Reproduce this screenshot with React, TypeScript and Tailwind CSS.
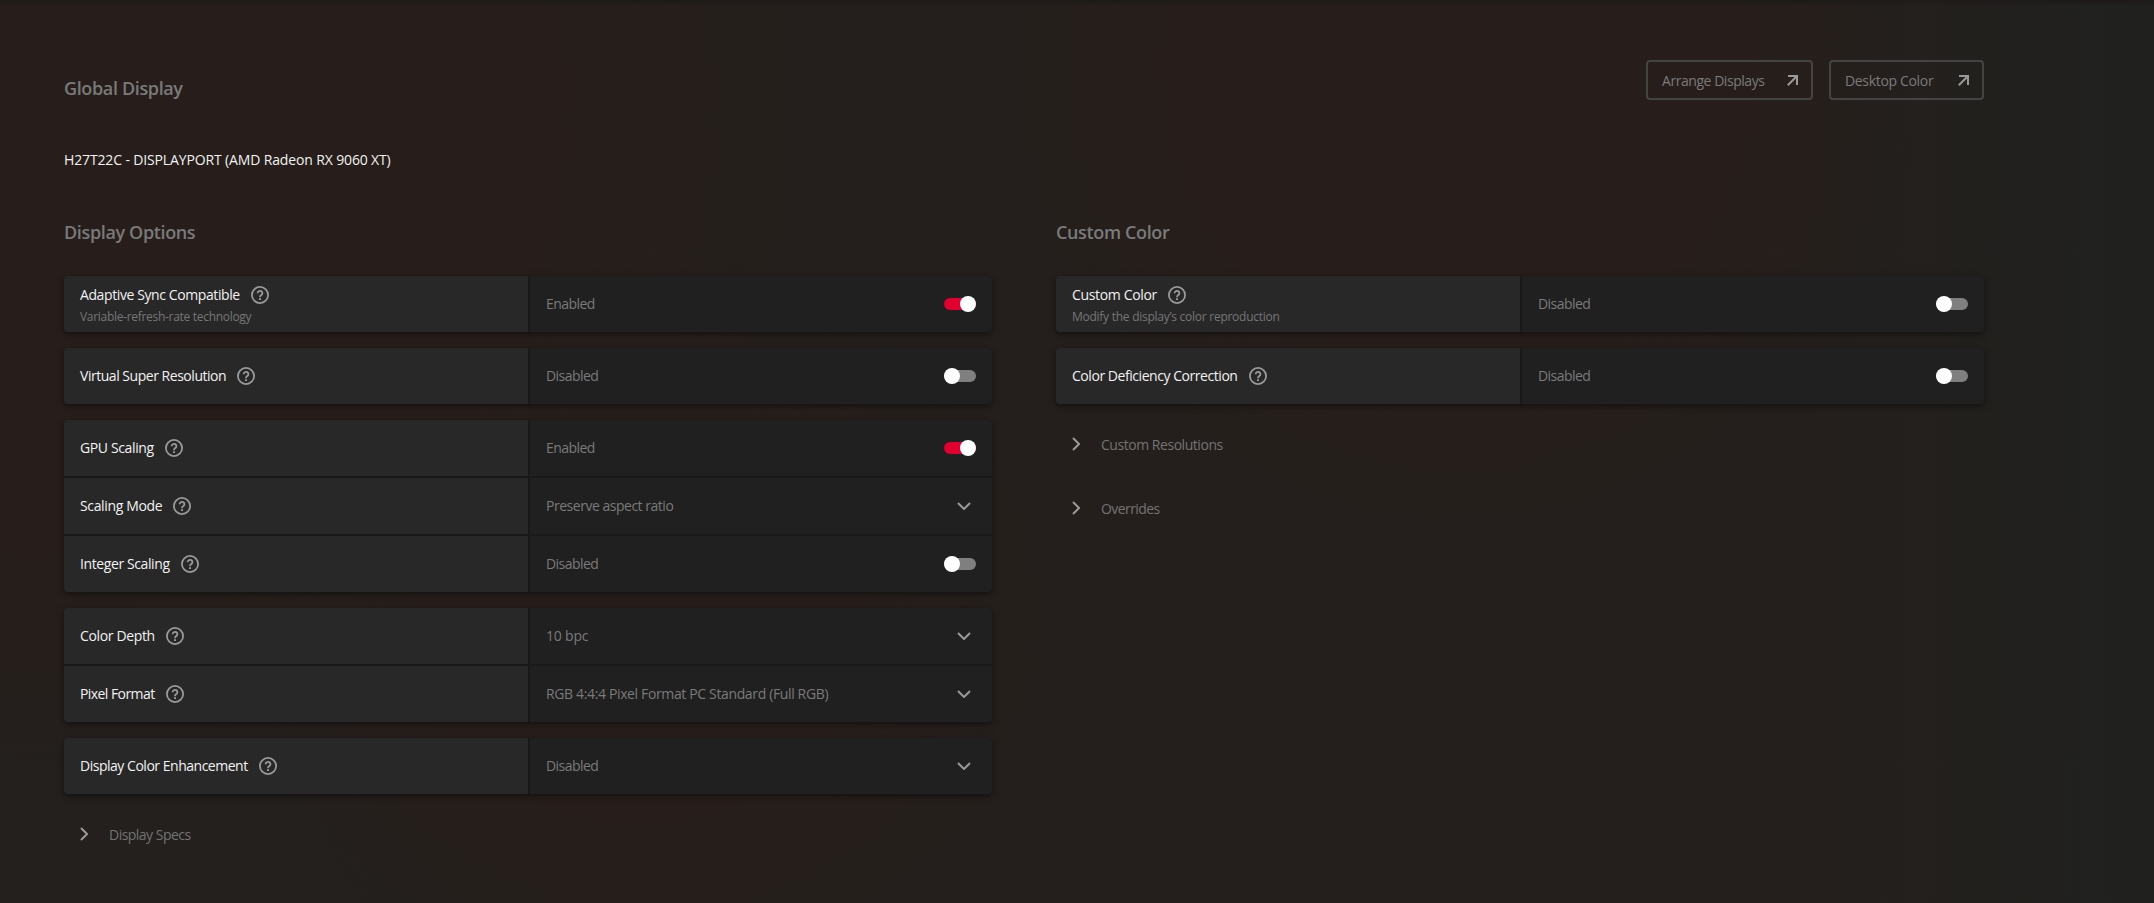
import { useState } from "react";

type Row = {
  label: string;
  labelClass: string;
  hint?: string;
  hintClass?: string;
  value?: string;
  valueClass?: string;
  kind: "toggle" | "select";
  on?: boolean;
};

const displayOptions: Row[][] = [
  [
    {
      label: "Adaptive Sync Compatible",
      labelClass: "tracking-[-0.4px]",
      hint: "Variable-refresh-rate technology",
      hintClass: "tracking-[-0.3px]",
      kind: "toggle",
      on: true,
    },
  ],
  [{ label: "Virtual Super Resolution", labelClass: "tracking-[-0.47px]", kind: "toggle" }],
  [
    { label: "GPU Scaling", labelClass: "tracking-[-0.37px]", kind: "toggle", on: true },
    {
      label: "Scaling Mode",
      labelClass: "tracking-[-0.36px]",
      value: "Preserve aspect ratio",
      valueClass: "tracking-[-0.48px]",
      kind: "select",
    },
    { label: "Integer Scaling", labelClass: "tracking-[-0.4px]", kind: "toggle" },
  ],
  [
    {
      label: "Color Depth",
      labelClass: "tracking-[-0.36px]",
      value: "10 bpc",
      valueClass: "tracking-[-0.2px]",
      kind: "select",
    },
    {
      label: "Pixel Format",
      labelClass: "tracking-[-0.57px]",
      value: "RGB 4:4:4 Pixel Format PC Standard (Full RGB)",
      valueClass: "tracking-[-0.36px]",
      kind: "select",
    },
  ],
  [
    {
      label: "Display Color Enhancement",
      labelClass: "tracking-[-0.48px]",
      value: "Disabled",
      valueClass: "tracking-[-0.54px]",
      kind: "select",
    },
  ],
];

const customColor: Row[][] = [
  [
    {
      label: "Custom Color",
      labelClass: "tracking-[-0.34px]",
      hint: "Modify the display’s color reproduction",
      hintClass: "tracking-[-0.26px]",
      kind: "toggle",
    },
  ],
  [{ label: "Color Deficiency Correction", labelClass: "tracking-[-0.45px]", kind: "toggle" }],
];

function HelpIcon() {
  return (
    <svg className="size-[18px] shrink-0 text-[#999999]" viewBox="0 0 18 18" fill="none" stroke="currentColor" strokeWidth="1.8">
      <circle cx="9" cy="9" r="8.1" />
      <path d="M6.6 7.2a2.4 2.3 0 1 1 3.7 1.9C9.4 9.7 9 10.1 9 11.2" />
      <path d="M8 12.2h2v1.9h-2z" fill="currentColor" stroke="none" />
    </svg>
  );
}

function Toggle({ on, onClick }: { on: boolean; onClick: () => void }) {
  return (
    <button
      onClick={onClick}
      className={`flex h-3 w-8 items-center rounded-full ${on ? "justify-end bg-[#e0002f]" : "bg-[#7f7f7f]"}`}
    >
      <span className="size-4 shrink-0 rounded-full bg-white" />
    </button>
  );
}

function SettingRow({ row }: { row: Row }) {
  const [on, setOn] = useState(!!row.on);

  return (
    <div className="flex h-14 gap-0.5">
      <div className="flex w-[464px] flex-col justify-center bg-[#282828] px-4">
        <div className="flex items-center gap-[11px]">
          <span className={`text-[14px] leading-5 text-[#f2f2f2] ${row.labelClass}`}>{row.label}</span>
          <HelpIcon />
        </div>
        {row.hint && (
          <p className={`mt-1 -mb-0.5 text-[12px] leading-4 text-[#767676] ${row.hintClass}`}>{row.hint}</p>
        )}
      </div>
      <div className="flex flex-1 items-center justify-between bg-[#202020] px-4">
        <span className={`text-[14px] leading-5 text-[#7a7a7a] ${row.valueClass ?? "tracking-[-0.54px]"}`}>
          {row.value ?? (on ? "Enabled" : "Disabled")}
        </span>
        {row.kind === "toggle" ? (
          <Toggle on={on} onClick={() => setOn(!on)} />
        ) : (
          <svg className="mr-[5px] h-2 w-[14px] text-[#999999]" viewBox="0 0 14 8" fill="none" stroke="currentColor" strokeWidth="2">
            <path d="M1 1l6 6 6-6" />
          </svg>
        )}
      </div>
    </div>
  );
}

function Groups({ groups }: { groups: Row[][] }) {
  return (
    <div className="flex flex-col gap-4">
      {groups.map((rows) => (
        <div
          key={rows[0].label}
          className="flex flex-col gap-0.5 overflow-hidden rounded bg-[#191919] shadow-[0_2px_6px_rgba(0,0,0,0.5)]"
        >
          {rows.map((row) => (
            <SettingRow key={row.label} row={row} />
          ))}
        </div>
      ))}
    </div>
  );
}

function Expander({ label, className }: { label: string; className: string }) {
  return (
    <button className={`flex h-16 items-center gap-[21px] pl-4 text-[14px] text-[#737373] ${className}`}>
      <svg className="h-[14px] w-2 text-[#999999]" viewBox="0 0 8 14" fill="none" stroke="currentColor" strokeWidth="2">
        <path d="M1 1l6 6-6 6" />
      </svg>
      {label}
    </button>
  );
}

function LinkButton({ label, className }: { label: string; className: string }) {
  return (
    <button
      className={`flex h-10 items-center justify-between rounded border-2 border-[#444444] pr-[13px] pl-3.5 text-[14px] text-[#7a7a7a] ${className}`}
    >
      {label}
      <svg className="size-[11px] text-[#999999]" viewBox="0 0 11 11" fill="none" stroke="currentColor" strokeWidth="2">
        <path d="M1 1h9v9M10 1L0.8 10.2" />
      </svg>
    </button>
  );
}

function Heading({ children }: { children: string }) {
  return <h2 className="mb-8 text-[18px] leading-6 font-semibold tracking-[-0.36px] text-[#7a7a7a]">{children}</h2>;
}

export default function App() {
  return (
    <div className="h-[903px] w-[2154px] overflow-hidden bg-[#241f1c] bg-[linear-gradient(to_bottom,#1d1a18_0px,transparent_6px),linear-gradient(to_right,transparent_84%,#20211f_100%),radial-gradient(460px_480px_at_1460px_60px,#271e1b_60%,transparent_100%),radial-gradient(720px_680px_at_100px_120px,#271e1b_60%,transparent_100%),radial-gradient(420px_360px_at_640px_620px,#271e1b_50%,transparent_100%),radial-gradient(500px_300px_at_60px_903px,#23201e_30%,transparent_100%)] pl-16 font-['Open_Sans','Noto_Sans',sans-serif]">
      <header className="flex h-[120px] w-[1920px] items-start justify-between pt-[60px]">
        <h1 className="mt-4 text-[18px] leading-6 font-semibold tracking-[-0.36px] text-[#7a7a7a]">Global Display</h1>
        <div className="flex gap-4">
          <LinkButton label="Arrange Displays" className="w-[167px] tracking-[-0.45px]" />
          <LinkButton label="Desktop Color" className="w-[155px] tracking-[-0.33px]" />
        </div>
      </header>
      <p className="mt-[30px] text-[14px] leading-5 tracking-[-0.14px] text-[#f2f2f2]">
        H27T22C - DISPLAYPORT (AMD Radeon RX 9060 XT)
      </p>

      <div className="mt-[50px] flex gap-16">
        <section className="w-[928px]">
          <Heading>Display Options</Heading>
          <Groups groups={displayOptions} />
          <div className="mt-2">
            <Expander label="Display Specs" className="tracking-[-0.52px]" />
          </div>
        </section>
        <section className="w-[928px]">
          <Heading>Custom Color</Heading>
          <Groups groups={customColor} />
          <div className="mt-2">
            <Expander label="Custom Resolutions" className="tracking-[-0.46px]" />
            <Expander label="Overrides" className="tracking-[-0.58px]" />
          </div>
        </section>
      </div>
    </div>
  );
}
